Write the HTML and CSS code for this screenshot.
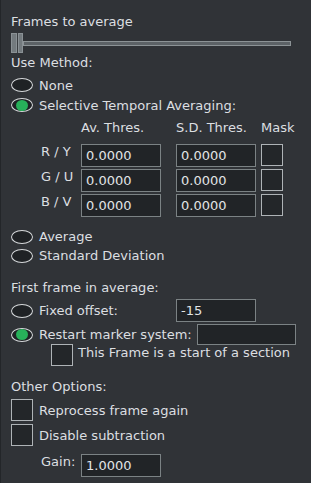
FILE: index.html
```html
<!DOCTYPE html>
<html>
<head>
<meta charset="utf-8">
<link rel="stylesheet" href="styles.css">
</head>
<body>
<div class="panel">
  <div class="line title">Frames to average</div>
  <div class="slider">
    <div class="handle"><span></span><span></span></div>
    <div class="track"></div>
  </div>
  <div class="line">Use Method:</div>
  <div class="radio-row r-none"><span class="radio"></span><span>None</span></div>
  <div class="radio-row"><span class="radio on"></span><span>Selective Temporal Averaging:</span></div>

  <div class="thres">
    <div class="hdr-row">
      <span class="lbl"></span>
      <span class="col">Av. Thres.</span>
      <span class="col col2">S.D. Thres.</span>
      <span class="col col3">Mask</span>
    </div>
    <div class="t-row">
      <span class="lbl">R / Y</span>
      <span class="field w80">0.0000</span>
      <span class="field w80 col2">0.0000</span>
      <span class="check col3"></span>
    </div>
    <div class="t-row">
      <span class="lbl">G / U</span>
      <span class="field w80">0.0000</span>
      <span class="field w80 col2">0.0000</span>
      <span class="check col3"></span>
    </div>
    <div class="t-row">
      <span class="lbl">B / V</span>
      <span class="field w80">0.0000</span>
      <span class="field w80 col2">0.0000</span>
      <span class="check col3"></span>
    </div>
  </div>

  <div class="radio-row r-avg"><span class="radio"></span><span>Average</span></div>
  <div class="radio-row r-sd"><span class="radio"></span><span>Standard Deviation</span></div>

  <div class="line first">First frame in average:</div>
  <div class="radio-row r-fixed"><span class="radio"></span><span class="fixed-label">Fixed offset:</span><span class="field w80">-15</span></div>
  <div class="radio-row r-restart"><span class="radio on"></span><span>Restart marker system:</span><span class="field restart"></span></div>
  <div class="check-row sub"><span class="check"></span><span class="ctext">This Frame is a start of a section</span></div>

  <div class="line other">Other Options:</div>
  <div class="check-row opt r-repro"><span class="check"></span><span>Reprocess frame again</span></div>
  <div class="check-row opt r-disable"><span class="check"></span><span>Disable subtraction</span></div>
  <div class="t-row gain"><span class="lbl">Gain:</span><span class="field w80">1.0000</span></div>
</div>
</body>
</html>
```

FILE: styles.css
```css
* { box-sizing: border-box; }
html, body {
  margin: 0;
  padding: 0;
  background: #303337;
}
body {
  width: 311px;
  height: 483px;
  overflow: hidden;
  font-family: "DejaVu Sans", sans-serif;
  font-size: 13px;
  color: #dcdfe1;
}
.panel {
  height: 483px;
  border-left: 1px solid #232629;
  padding: 12px 0 0 10px;
  display: flex;
  flex-direction: column;
}
.line {
  height: 20px;
  line-height: 20px;
  white-space: nowrap;
}
.slider {
  height: 21px;
  display: flex;
  align-items: center;
}
.handle {
  width: 12px;
  height: 20px;
  margin-top: 1px;
  display: flex;
  gap: 1px;
  background: #3a3e42;
}
.handle span {
  flex: 1;
  background: #737a7e;
  border: 1px solid #8a9195;
}
.track {
  width: 268px;
  height: 5px;
  margin-top: 1px;
  border: 1px solid #8c9396;
  background: #5c6266;
}
.radio-row {
  display: flex;
  align-items: center;
  gap: 6px;
  height: 20px;
  white-space: nowrap;
}
.r-none { margin-top: 2px; }
.radio {
  width: 22px;
  height: 14px;
  border-radius: 50%;
  border: 1.5px solid #d6d9db;
  background: #1f2225;
  display: flex;
  align-items: center;
  justify-content: center;
  flex: none;
}
.radio.on::after {
  content: "";
  width: 12px;
  height: 11px;
  border-radius: 50%;
  background: #27b15a;
}
.thres {
  margin-top: 3px;
  margin-left: 30px;
  display: flex;
  flex-direction: column;
  gap: 2px;
}
.hdr-row {
  display: flex;
  height: 20px;
  line-height: 20px;
  margin-bottom: 4px;
  white-space: nowrap;
}
.hdr-row .col { width: 80px; }
.hdr-row .col3 { width: 30px; }
.t-row {
  display: flex;
  align-items: flex-start;
  height: 23px;
}
.lbl {
  width: 40px;
  line-height: 15px;
  flex: none;
  white-space: nowrap;
}
.col2 { margin-left: 15px; }
.col3 { margin-left: 5px; }
.field {
  height: 23px;
  border: 1px solid #7b8284;
  background: #212427;
  line-height: 21px;
  padding-left: 4px;
  color: #e2e4e6;
  flex: none;
}
.w80 { width: 80px; }
.check {
  width: 22px;
  height: 22px;
  border: 1px solid #aeb3b6;
  background: #232629;
  flex: none;
}
.r-avg { margin-top: 10px; height: 19px; }
.r-sd { height: 19px; }
.first { margin-top: 13px; }
.r-fixed { margin-top: 1px; height: 23px; }
.fixed-label { width: 131px; }
.r-restart { margin-top: 2px; height: 21px; gap: 6px; }
.field.restart { width: 99px; height: 21px; margin-left: -1px; }
.check-row {
  display: flex;
  white-space: nowrap;
}
.check-row.sub {
  margin-top: -1px;
  margin-left: 40px;
  height: 22px;
  gap: 5px;
  align-items: flex-start;
}
.ctext { line-height: 15px; margin-top: 1px; }
.other { margin-top: 11px; }
.check-row.opt {
  height: 22px;
  gap: 6px;
  align-items: center;
}
.r-repro { margin-top: 2px; }
.r-disable { margin-top: 3px; }
.gain { margin-top: 8px; margin-left: 30px; }
.gain .lbl { line-height: 16px; }
```
